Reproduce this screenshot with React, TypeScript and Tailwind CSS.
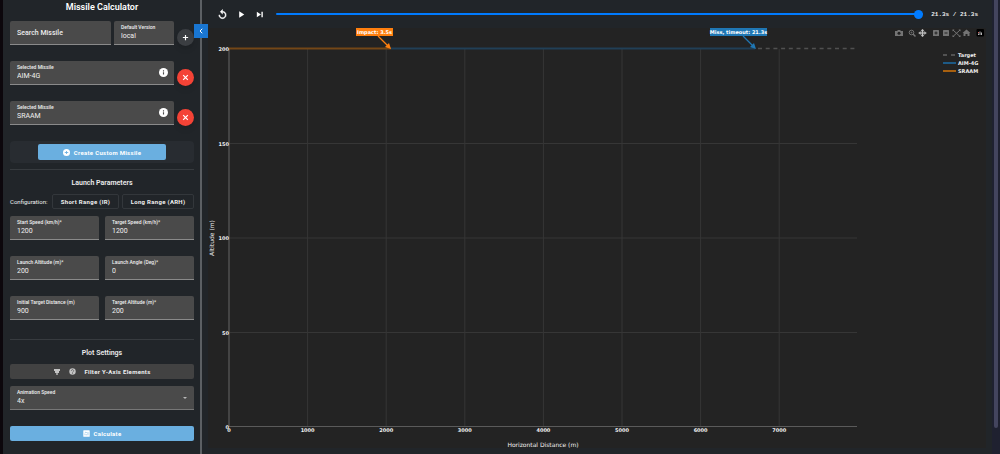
import type { ReactNode } from "react";

interface FieldProps {
  id: string;
  label: string;
  value: string;
  children?: ReactNode;
}

const Field = ({ id, label, value, children }: FieldProps) => {
  return (
    <div className="relative flex h-6 min-w-0 flex-1 flex-col justify-center gap-px rounded-t-xs border-b border-[#8a8a8a] bg-[#4a4a4a] px-[7px]">
      <label
        htmlFor={id}
        className="text-[5px] leading-[6px] font-medium whitespace-nowrap text-[#f0f0f0]"
      >
        {label}
      </label>
      <input
        id={id}
        type="text"
        defaultValue={value}
        className="h-[10px] w-full min-w-0 bg-transparent text-[7px] leading-[10px] text-[#f0f0f0] outline-none"
      />
      {children}
    </div>
  );
};

interface MissileRowProps {
  id: string;
  name: string;
}

const MissileRow = ({ id, name }: MissileRowProps) => {
  return (
    <div className="flex h-[25px] items-start gap-[3px]">
      <Field id={id} label="Selected Missile" value={name}>
        <button
          aria-label={`About ${name}`}
          className="absolute top-[7px] right-[6px] size-[9px]"
        >
          <svg viewBox="0 0 24 24" className="size-full" fill="none">
            <circle cx="12" cy="12" r="12" fill="#fff" />
            <path d="M12 11v6M12 6v3" stroke="#4a4a4a" strokeWidth="3" />
          </svg>
        </button>
      </Field>
      <button
        aria-label={`Remove ${name}`}
        className="mt-2 flex size-[17px] items-center justify-center rounded-full bg-[#f44336] shadow-md"
      >
        <svg viewBox="0 0 24 24" className="size-[7px]">
          <path d="M4 4l16 16M20 4L4 20" stroke="#fff" strokeWidth="4" />
        </svg>
      </button>
    </div>
  );
};

const PARAMETERS = [
  { id: "start-speed", label: "Start Speed (km/h)*", value: "1200" },
  { id: "target-speed", label: "Target Speed (km/h)*", value: "1200" },
  { id: "launch-altitude", label: "Launch Altitude (m)*", value: "200" },
  { id: "launch-angle", label: "Launch Angle (Deg)*", value: "0" },
  { id: "target-distance", label: "Initial Target Distance (m)", value: "900" },
  { id: "target-altitude", label: "Target Altitude (m)*", value: "200" },
];

const Sidebar = () => {
  return (
    <aside className="w-[199px] flex-none border-r-2 border-[#5c6064] bg-[#212529] pr-[6px] pl-[7px]">
      <h1 className="pt-px text-center text-[9px] leading-3 font-semibold text-white">
        Missile Calculator
      </h1>

      <div className="mt-2 flex flex-col gap-[15px]">
        <div className="flex h-[25px] items-start gap-[3px]">
          <input
            type="text"
            aria-label="Search Missile"
            placeholder="Search Missile"
            className="h-6 w-[101px] flex-none rounded-t-xs border-b border-[#8a8a8a] bg-[#4a4a4a] px-[7px] text-[7px] font-medium text-white outline-none placeholder:text-[#ececec]"
          />
          <Field id="version" label="Default Version" value="local" />
          <button
            aria-label="Add missile"
            className="mt-2 flex size-[17px] flex-none items-center justify-center rounded-full bg-[#3b3e42] shadow-md"
          >
            <svg viewBox="0 0 24 24" className="size-[7px]">
              <path d="M12 3v18M3 12h18" stroke="#fff" strokeWidth="4" />
            </svg>
          </button>
        </div>
        <MissileRow id="missile-1" name="AIM-4G" />
        <MissileRow id="missile-2" name="SRAAM" />
      </div>

      <div className="mt-[15px] flex h-[22px] items-center justify-center rounded bg-[#282c31]">
        <button className="flex h-4 w-[128px] items-center justify-center gap-1 rounded-xs bg-[#6aafe0] text-[6px] font-bold tracking-wider text-white">
          <svg viewBox="0 0 24 24" className="size-[7px]">
            <circle cx="12" cy="12" r="12" fill="#fff" />
            <path d="M12 7v10M6 12h12" stroke="#6aafe0" strokeWidth="3" />
          </svg>
          Create Custom Missile
        </button>
      </div>

      <section className="mt-[6px] border-t border-[#373b3f] pt-2">
        <h2 className="text-center text-[7px] leading-[10px] font-semibold text-[#ececec]">
          Launch Parameters
        </h2>
        <div className="mt-[6px] flex items-center justify-between">
          <span className="text-[6px] text-[#f0f0f0]">Configuration:</span>
          <div className="flex gap-[3px]">
            <button className="h-[15px] w-[67px] rounded-xs border border-[#33373b] text-[6px] leading-none font-bold tracking-wider text-[#f0f0f0]">
              Short Range (IR)
            </button>
            <button className="h-[15px] w-[72px] rounded-xs border border-[#33373b] text-[6px] leading-none font-bold tracking-wider text-[#f0f0f0]">
              Long Range (ARH)
            </button>
          </div>
        </div>
        <div className="mt-[7px] grid grid-cols-2 gap-x-[6px] gap-y-4">
          {PARAMETERS.map((p) => (
            <Field key={p.id} id={p.id} label={p.label} value={p.value} />
          ))}
        </div>
      </section>

      <section className="mt-[19px] border-t border-[#373b3f] pt-2">
        <h2 className="text-center text-[7px] leading-[10px] font-semibold text-[#ececec]">
          Plot Settings
        </h2>
        <button className="mt-[6px] flex h-[15px] w-full items-center justify-center rounded-xs bg-[#424242] text-[6px] font-bold tracking-wider text-[#f0f0f0]">
          <svg viewBox="0 0 24 24" className="mr-2 size-[8px]">
            <path
              d="M3 6h18M6 12h12M10 18h4"
              stroke="#f0f0f0"
              strokeWidth="4"
            />
          </svg>
          <svg viewBox="0 0 24 24" className="mr-2 size-[7px]">
            <circle cx="12" cy="12" r="11" fill="#c4c4c4" />
            <path
              d="M8 10a4 4 0 1 1 6 3q-2 1-2 3M12 17v3"
              fill="none"
              stroke="#424242"
              strokeWidth="2"
            />
          </svg>
          Filter Y-Axis Elements
        </button>
        <div className="relative mt-[7px] flex h-6 flex-col justify-center gap-px rounded-t-xs border-b border-[#777] bg-[#4a4a4a] px-[7px]">
          <label
            htmlFor="animation-speed"
            className="text-[5px] leading-[6px] font-medium text-[#f0f0f0]"
          >
            Animation Speed
          </label>
          <select
            id="animation-speed"
            defaultValue="4x"
            className="h-[10px] w-full appearance-none bg-transparent text-[7px] leading-[10px] text-[#f0f0f0] outline-none"
          >
            <option>1x</option>
            <option>2x</option>
            <option>4x</option>
          </select>
          <svg
            viewBox="0 0 8 4"
            className="pointer-events-none absolute top-[11px] right-[7px] h-[2px] w-1"
          >
            <path d="M0 0h8L4 4z" fill="#b8b8b8" />
          </svg>
        </div>
        <button className="mt-4 flex h-[15px] w-full items-center justify-center gap-1 rounded-xs bg-[#6aafe0] text-[6px] font-bold tracking-wider text-white">
          <svg viewBox="0 0 24 24" className="size-[7px]">
            <rect x="1" y="1" width="22" height="22" rx="2" fill="#fff" />
            <path
              d="M7 18v-5M12 18v-3M17 18V7M6 10l4-3 3 3"
              fill="none"
              stroke="#6aafe0"
              strokeWidth="2"
            />
          </svg>
          Calculate
        </button>
      </section>
    </aside>
  );
};

const Playback = () => {
  return (
    <div className="flex h-7 items-center pr-[14px] pl-[15px]">
      <div className="flex gap-2">
        <button aria-label="Restart">
          <svg
            viewBox="0 0 24 24"
            className="size-[11px]"
            fill="#fff"
            stroke="#fff"
          >
            <path d="M12 5V1L7 6l5 5V7c3.300 0 6 2.700 6 6s-2.700 6-6 6-6-2.700-6-6H4c0 4.400 3.600 8 8 8s8-3.600 8-8-3.600-8-8-8z" />
          </svg>
        </button>
        <button aria-label="Play">
          <svg viewBox="0 0 24 24" className="size-[11px]" fill="#fff">
            <path d="M7 5v14l11-7z" />
          </svg>
        </button>
        <button aria-label="Skip to end">
          <svg viewBox="0 0 24 24" className="size-[11px]" fill="#fff">
            <path d="M4 18l9-6-9-6zM14 6v12h3V6z" />
          </svg>
        </button>
      </div>
      <input
        type="range"
        aria-label="Time"
        min={0}
        max={21.3}
        step={0.1}
        defaultValue={21.3}
        className="ml-[10px] h-[2px] min-w-0 flex-1 appearance-none rounded-full bg-[#007bff] [&::-webkit-slider-thumb]:size-[9px] [&::-webkit-slider-thumb]:appearance-none [&::-webkit-slider-thumb]:rounded-full [&::-webkit-slider-thumb]:bg-[#007bff]"
      />
      <span className="ml-2 font-['Liberation_Mono',monospace] text-[6px] font-bold whitespace-nowrap text-[#ececec]">
        21.3s / 21.3s
      </span>
    </div>
  );
};

const LEFT = 21;
const RIGHT = 649;
const TOP = 21;
const BOTTOM = 399;

const xPos = (km: number) => LEFT + km * 78.6;
const yPos = (alt: number) => BOTTOM - (alt / 200) * (BOTTOM - TOP);

interface CalloutProps {
  x: number;
  width: number;
  color: string;
  text: string;
  tipX: number;
}

const Callout = ({ x, width, color, text, tipX }: CalloutProps) => {
  return (
    <g>
      <path
        d={`M${tipX - 13} 8L${tipX - 2} 19`}
        stroke={color}
        strokeWidth="1.300"
      />
      <path d={`M${tipX} 21l-6-2 4-4z`} fill={color} />
      <rect x={x} y="0" width={width} height="8" fill={color} />
      <text
        x={x + width / 2}
        y="6"
        fontSize="5"
        fontWeight="bold"
        textAnchor="middle"
        fill="#fff"
      >
        {text}
      </text>
    </g>
  );
};

const LEGEND = [
  { name: "Target", color: "#636363", dash: "4 4" },
  { name: "AIM-4G", color: "#1d5a86" },
  { name: "SRAAM", color: "#a8600f" },
];

const Modebar = () => {
  return (
    <g fill="#747474">
      <path d="M687 3h2l1-1h2l1 1h2v5h-8z" />
      <circle cx="691" cy="5.300" r="1.500" fill="#222" />
      <g fill="none" stroke="#747474">
        <circle cx="703.500" cy="4.500" r="2.300" />
        <path d="M705 6l2.500 2.500" strokeWidth="1.500" />
        <path d="M702.500 4.500h2M703.500 3.500v2" strokeWidth=".6" />
      </g>
      <path
        d="M714.500 1l1.500 2h-1v1.500h1.500v-1l2 1.500-2 1.500v-1H715V7h1l-1.500 2L713 7h1V5.500h-1.500v1l-2-1.500 2-1.500v1h1.500V3h-1z"
        fill="#c4c4c4"
        stroke="#c4c4c4"
        strokeWidth=".3"
      />
      <rect x="725" y="2" width="6" height="6" rx="0.500" />
      <path d="M726.500 5h3M728 3.500v3" stroke="#222" />
      <rect x="735" y="2" width="6" height="6" rx="0.500" />
      <path d="M736.500 5h3" stroke="#222" />
      <path d="M745 2l7 6.500M752 2l-7 6.500" fill="none" stroke="#747474" />
      <path d="M744.500 1.500h2l-2 2zM752.500 1.500h-2l2 2zM744.500 9h2l-2-2zM752.500 9h-2l2-2z" />
      <path d="M758.500 1.500l4 3.500h-1v3h-2V6h-2v2h-2V5h-1z" />
      <rect x="768.500" y="1" width="7.500" height="7.500" rx="1" fill="#000" />
      <path
        d="M770 7V5.500h1V7M771.500 7V3.500h1V7M773 7V4.500h1V7"
        fill="#b8b8b8"
      />
      <path d="M770 4h1v1h-1z" fill="#d05c5c" />
    </g>
  );
};

const Chart = () => {
  return (
    <svg
      viewBox="0 0 778 420"
      className="block w-full bg-[#232323] font-['DejaVu_Sans',sans-serif]"
      fill="#f0f0f0"
    >
      <g stroke="#363636">
        {[50, 100, 150].map((alt) => (
          <path key={alt} d={`M${LEFT} ${yPos(alt)}H${RIGHT}`} />
        ))}
        {[1, 2, 3, 4, 5, 6, 7].map((km) => (
          <path key={km} d={`M${xPos(km)} ${TOP}V${BOTTOM}`} />
        ))}
      </g>
      <path d={`M${LEFT} ${TOP}V${BOTTOM}`} stroke="#444" strokeWidth="2" />
      <path d={`M${LEFT} 398.500H${RIGHT}`} stroke="#5a5a5a" />

      <path
        d={`M550 20.500H${RIGHT}`}
        stroke="#505050"
        strokeWidth="1.500"
        strokeDasharray="4 3.700"
      />
      <path d="M183 20.500H547" stroke="#213f56" strokeWidth="2" />
      <path d="M21 20.500H183" stroke="#744717" strokeWidth="2" />

      <g fontSize="5" fontWeight="bold">
        {[0, 50, 100, 150, 200].map((alt) => (
          <text key={alt} x={LEFT} y={yPos(alt) + 2} textAnchor="end">
            {alt}
          </text>
        ))}
        {[0, 1, 2, 3, 4, 5, 6, 7].map((km) => (
          <text key={km} x={xPos(km)} y="404" textAnchor="middle">
            {km * 1000}
          </text>
        ))}
        {LEGEND.map((item, i) => (
          <g key={item.name}>
            <path
              d={`M735 ${27 + i * 8}h13`}
              stroke={item.color}
              strokeWidth={item.dash ? 1.5 : 2}
              strokeDasharray={item.dash}
            />
            <text x="750" y={29 + i * 8}>
              {item.name}
            </text>
          </g>
        ))}
      </g>
      <g fontSize="6" textAnchor="middle">
        <text x="335" y="419">
          Horizontal Distance (m)
        </text>
        <text transform="translate(6 210) rotate(-90)">Altitude (m)</text>
      </g>

      <Callout x={148} width={37} color="#ff7f0e" text="Impact: 3.5s" tipX={183} />
      <Callout x={502} width={57} color="#1f77b4" text="Miss, timeout: 21.3s" tipX={548} />
      <Modebar />
    </svg>
  );
};

export default function App() {
  return (
    <div className="flex min-h-screen bg-[#0c070c] pl-[3px] font-[Roboto,sans-serif]">
      <Sidebar />
      <main className="relative min-w-0 flex-1 bg-[#212529]">
        <button
          aria-label="Collapse panel"
          className="absolute top-6 -left-2 flex size-[14px] items-center justify-center bg-[#1976d2]"
        >
          <svg viewBox="0 0 24 24" className="size-[6px]" fill="none">
            <path d="M17 3l-9 9 9 9" stroke="#fff" strokeWidth="4" />
          </svg>
        </button>
        <Playback />
        <div className="px-[6px]">
          <Chart />
        </div>
      </main>
      <div className="w-[8px] flex-none bg-[#1f2130] px-[2px]">
        <div className="h-[428px] rounded-b bg-[#44455e]" />
      </div>
    </div>
  );
}
